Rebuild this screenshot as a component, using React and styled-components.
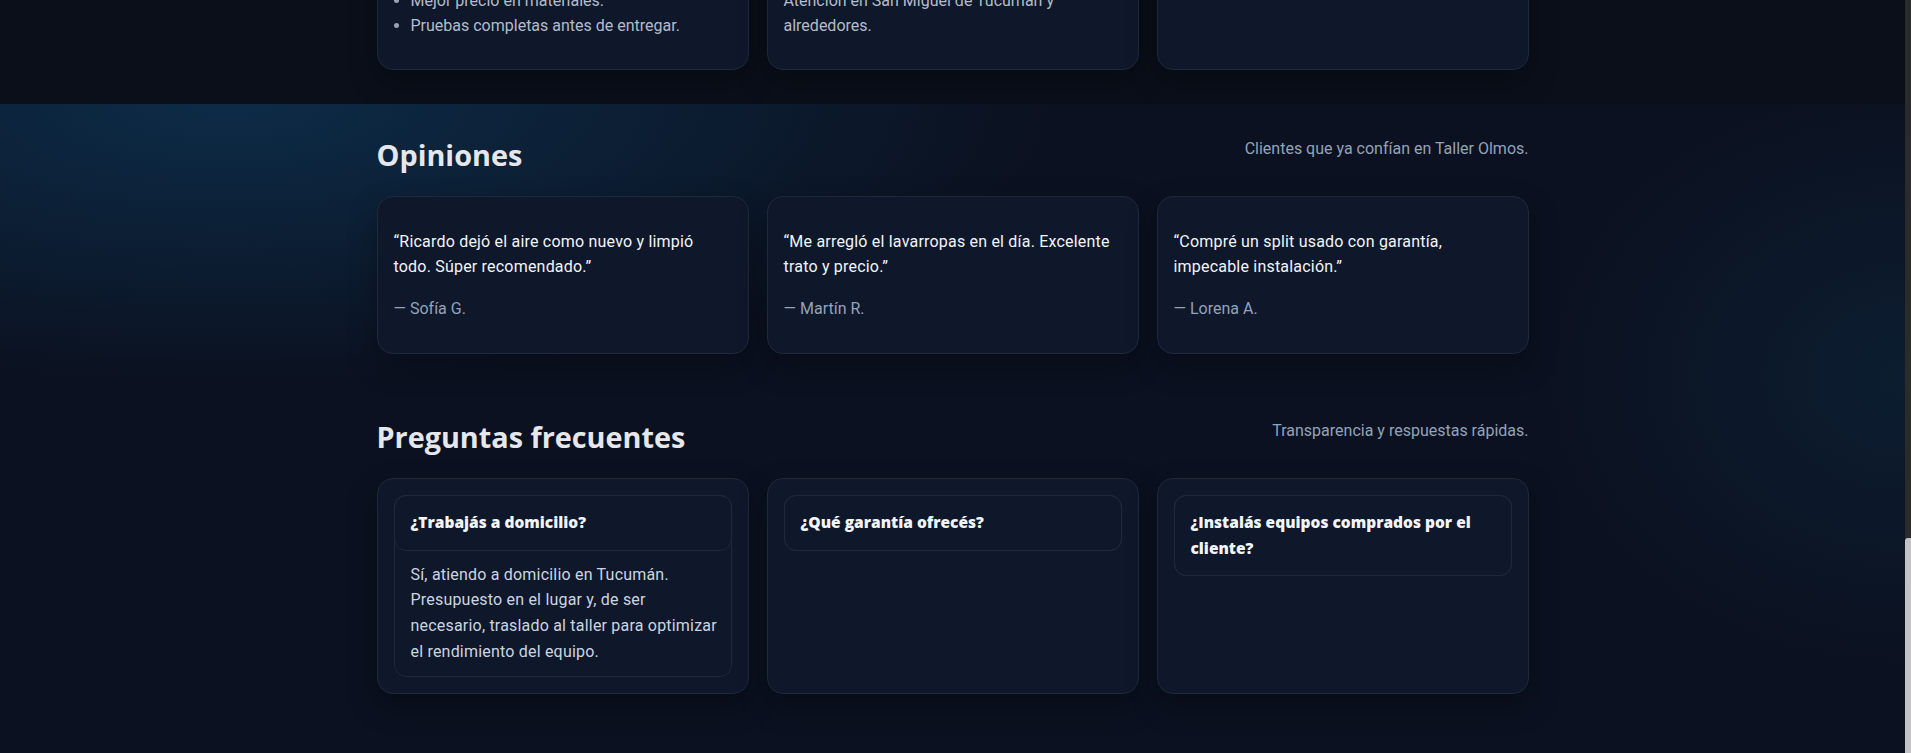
import React from 'react';
import styled, { createGlobalStyle } from 'styled-components';

const GlobalStyle = createGlobalStyle`
	* { box-sizing: border-box; }
	html, body {
		margin: 0;
		padding: 0;
		background: #0b1120;
	}
	body {
		font-family: Roboto, "Liberation Sans", Arial, sans-serif;
		color: #e2e8f0;
		-webkit-font-smoothing: antialiased;
	}
`;

const Viewport = styled.div`
	display: flex;
	height: 100vh;
	overflow: hidden;
`;

const Page = styled.main`
	flex: 1;
	min-width: 0;
	display: flex;
	flex-direction: column;
	background: #0b1120;
`;

const Scrollbar = styled.div`
	width: 6px;
	flex-shrink: 0;
	display: flex;
	flex-direction: column;
	justify-content: flex-end;
	background: #2b2b2b;
`;

const Thumb = styled.div`
	height: 215px;
	background: #c3c3c3;
	border-radius: 3px 0 0 0;
`;

// band of the previous section, scrolled almost out of view
const TopBand = styled.section`
	height: 104px;
	overflow: hidden;
	display: flex;
	align-items: flex-end;
	padding-bottom: 34px;
	background: #0a0f1a;
`;

const Glow = styled.div`
	flex: 1;
	background:
		radial-gradient(ellipse 1150px 390px at 12% 0%, rgba(13, 48, 78, 0.85), rgba(13, 48, 78, 0) 72%),
		radial-gradient(ellipse 520px 420px at 100% 42%, rgba(14, 42, 66, 0.5), rgba(14, 42, 66, 0) 70%),
		#0b1120;
`;

const Section = styled.section`
	padding: 34px 0 32px;
`;

const Container = styled.div`
	width: 100%;
	max-width: 1152px;
	margin: 0 auto;
`;

const Header = styled.div`
	display: flex;
	justify-content: space-between;
	align-items: flex-start;
	margin-bottom: 24px;
`;

const Title = styled.h2`
	margin: 0;
	font-family: "Open Sans", "Noto Sans", sans-serif;
	font-size: 28.8px;
	line-height: 1.17;
	font-weight: 700;
	color: #e5e7eb;
`;

const Lead = styled.p`
	margin: 0;
	font-size: 16px;
	line-height: 1.4;
	color: #94a3b8;
`;

const Grid = styled.div`
	display: grid;
	grid-template-columns: repeat(3, 1fr);
	gap: 18px;
`;

const Card = styled.div`
	background: #0f172a;
	border: 1px solid #1e293b;
	border-radius: 16px;
	padding: 16px;
	box-shadow: 0 12px 30px rgba(0, 0, 0, 0.3);
`;

const InfoCard = styled(Card)`
	display: flex;
	flex-direction: column;
`;

const CardTitle = styled.h3`
	margin: 0 0 10px;
	font-size: 18px;
	line-height: 1.4;
	color: #e5e7eb;
`;

const List = styled.ul`
	margin: ${props => props.$pinned ? 'auto 0 14px' : '0 0 14px'};
	padding-left: 17px;
	font-size: 16px;
	line-height: 1.6;
	color: #b2bdcb;
	li::marker { color: #94a3b8; }
`;

const Note = styled.p`
	margin: ${props => props.$pinned ? 'auto 0 14px' : '0 0 14px'};
	font-size: 16px;
	line-height: 1.6;
	color: #b2bdcb;
`;

const Quote = styled.p`
	margin: 16px 0;
	font-size: 16px;
	line-height: 1.6;
	letter-spacing: 0.2px;
	color: #f1f5f9;
`;

const Author = styled.p`
	margin: 16px 0;
	font-size: 16px;
	line-height: 1.6;
	color: #94a3b8;
`;

const Details = styled.details`
	border: 1px solid #1e293b;
	border-radius: 12px;
`;

const Question = styled.summary`
	display: block;
	list-style: none;
	margin: -1px;
	padding: 14px 16px;
	border: 1px solid #1e293b;
	border-radius: 12px;
	font-family: "Open Sans", "Noto Sans", sans-serif;
	font-size: 15.5px;
	font-weight: 800;
	line-height: 25.6px;
	color: #f1f5f9;
	cursor: pointer;
	&::-webkit-details-marker { display: none; }
`;

const Answer = styled.p`
	margin: 0;
	padding: 12px 10px 12px 16px;
	font-size: 16px;
	line-height: 1.6;
	letter-spacing: 0.2px;
	color: #cbd5e1;
`;

const reviews = [
	{ text: '“Ricardo dejó el aire como nuevo y limpió todo. Súper recomendado.”', author: 'Sofía G.' },
	{ text: '“Me arregló el lavarropas en el día. Excelente trato y precio.”', author: 'Martín R.' },
	{ text: '“Compré un split usado con garantía, impecable instalación.”', author: 'Lorena A.' },
];

const faqs = [
	{
		q: '¿Trabajás a domicilio?',
		a: 'Sí, atiendo a domicilio en Tucumán. Presupuesto en el lugar y, de ser necesario, traslado al taller para optimizar el rendimiento del equipo.',
		open: true,
	},
	{ q: '¿Qué garantía ofrecés?', a: 'Todos los trabajos tienen garantía escrita de 90 días.' },
	{ q: '¿Instalás equipos comprados por el cliente?', a: 'Sí, con materiales incluidos y prueba de funcionamiento.' },
];

export default function App() {
	return (
		<Viewport>
			<GlobalStyle />
			<Page>
				<TopBand>
					<Container>
						<Grid>
							<InfoCard>
								<CardTitle>¿Por qué elegirme?</CardTitle>
								<List $pinned>
									<li>Diagnóstico claro y sin sorpresas.</li>
									<li>Repuestos originales o de primera.</li>
									<li>Mejor precio en materiales.</li>
									<li>Pruebas completas antes de entregar.</li>
								</List>
							</InfoCard>
							<InfoCard>
								<CardTitle>Cobertura</CardTitle>
								<Note>Turnos rápidos y respuesta por WhatsApp.</Note>
								<Note $pinned>Atención en San Miguel de Tucumán y alrededores.</Note>
							</InfoCard>
							<InfoCard>
								<CardTitle>Horarios</CardTitle>
								<Note>Lunes a sábado de 8 a 20 h.</Note>
							</InfoCard>
						</Grid>
					</Container>
				</TopBand>
				<Glow>
					<Section>
						<Container>
							<Header>
								<Title>Opiniones</Title>
								<Lead>Clientes que ya confían en Taller Olmos.</Lead>
							</Header>
							<Grid>
								{reviews.map(r => (
									<Card key={r.author}>
										<Quote>{r.text}</Quote>
										<Author>— {r.author}</Author>
									</Card>
								))}
							</Grid>
						</Container>
					</Section>
					<Section>
						<Container>
							<Header>
								<Title>Preguntas frecuentes</Title>
								<Lead>Transparencia y respuestas rápidas.</Lead>
							</Header>
							<Grid>
								{faqs.map(f => (
									<Card key={f.q}>
										<Details open={f.open}>
											<Question>{f.q}</Question>
											<Answer>{f.a}</Answer>
										</Details>
									</Card>
								))}
							</Grid>
						</Container>
					</Section>
				</Glow>
			</Page>
			<Scrollbar>
				<Thumb />
			</Scrollbar>
		</Viewport>
	);
}
